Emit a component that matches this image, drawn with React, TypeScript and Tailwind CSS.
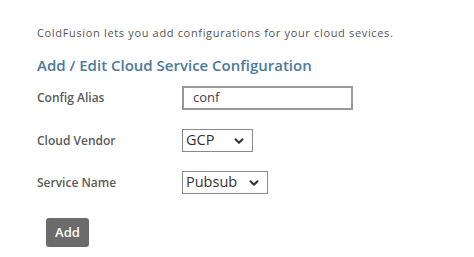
import { ChevronDown } from "lucide-react";

function Select({ value, width }: { value: string; width: string }) {
  return (
    <div
      className={`${width} h-[23px] border border-[#8a8a8a] bg-white flex items-center justify-between pl-[3px] pr-[6px]`}
    >
      <span className="text-[14.5px] text-[#333] leading-none">{value}</span>
      <ChevronDown size={14} strokeWidth={3.5} className="text-[#333]" />
    </div>
  );
}

export default function App() {
  return (
    <div
      className="w-[474px] h-[257px] bg-white pl-[37px] pt-[25px]"
      style={{ fontFamily: '"Open Sans", "Noto Sans", sans-serif' }}
    >
      <p className="text-[11px] tracking-[0.66px] text-[#555] leading-[16px]">
        ColdFusion lets you add configurations for your cloud sevices.
      </p>
      <h2 className="mt-[14px] text-[15px] font-semibold text-[#4a7a9c] leading-[20px]">
        Add / Edit Cloud Service Configuration
      </h2>
      <div className="mt-[11px] flex flex-col gap-[19px]">
        <div className="flex items-center">
          <label className="w-[145px] text-[12px] font-semibold text-[#5a5a5a]">
            Config Alias
          </label>
          <div className="w-[171px] h-[24px] border-2 border-[#999] flex items-center pl-[9px] text-[13px] text-[#444]">
            conf
          </div>
        </div>
        <div className="flex items-center">
          <label className="w-[145px] text-[12px] font-semibold text-[#5a5a5a]">
            Cloud Vendor
          </label>
          <Select value="GCP" width="w-[71px]" />
        </div>
        <div className="flex items-center">
          <label className="w-[145px] text-[12px] font-semibold text-[#5a5a5a]">
            Service Name
          </label>
          <Select value="Pubsub" width="w-[86px]" />
        </div>
      </div>
      <button className="mt-[24px] ml-[9px] w-[43px] h-[29px] rounded-[3px] bg-[#6b6b6b] text-white text-[13px] font-semibold">
        Add
      </button>
    </div>
  );
}
